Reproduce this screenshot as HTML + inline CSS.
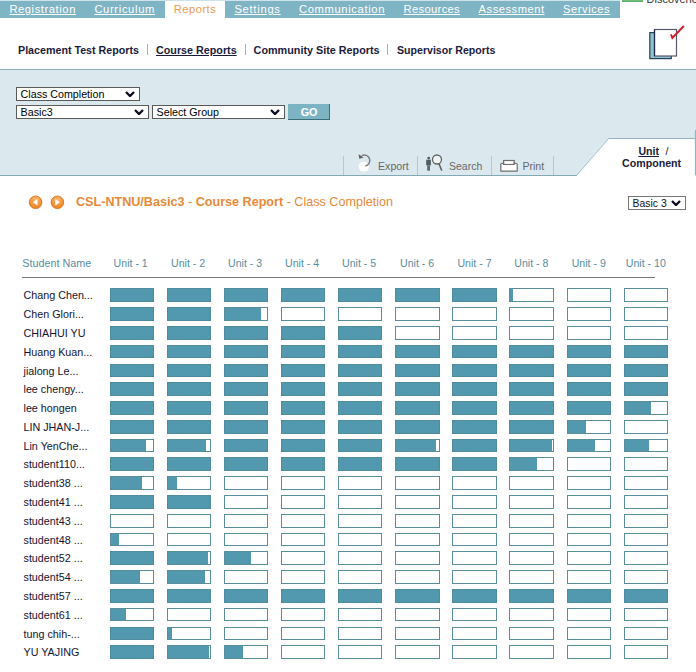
<!DOCTYPE html>
<html><head><meta charset="utf-8">
<style>
html,body{margin:0;padding:0;}
body{width:696px;height:672px;overflow:hidden;position:relative;background:#fff;font-family:"Liberation Sans",sans-serif;}
.a{position:absolute;}
.t{position:absolute;white-space:nowrap;line-height:1;}
.nav{position:absolute;left:0;top:1px;width:620px;height:17px;background:#7fb4c4;}
.nl{color:#fff;text-decoration:underline;text-underline-offset:0.5px;text-decoration-thickness:1px;}
.bf{position:absolute;width:42px;height:12px;border:1px solid #4f8d9e;background:#5298ae;}
.be{position:absolute;width:42px;height:12px;border:1px solid #5a8e9b;background:#fff;}
.be i{position:absolute;left:0;top:0;height:12px;background:#5298ae;}
.sel{position:absolute;border:1px solid #5a5a5a;background:#fff;box-sizing:border-box;}
.chev{position:absolute;}
.sep{position:absolute;width:1px;background:#a8cdd6;}
</style></head><body>
<!-- top nav -->
<div class="a" style="left:0;top:0;width:620px;height:1px;background:#cfe3ea"></div>
<div class="nav"></div>
<div class="a" style="left:165px;top:1px;width:60px;height:18px;background:#fff"></div>
<div class="t nl" style="left:9.4px;top:3.9px;font-size:11.2px;letter-spacing:0.57px">Registration</div>
<div class="t nl" style="left:94.4px;top:3.9px;font-size:11.2px;letter-spacing:0.65px">Curriculum</div>
<div class="t" style="left:173.8px;top:3.9px;font-size:11.2px;letter-spacing:0.47px;color:#ec9a55">Reports</div>
<div class="t nl" style="left:234.4px;top:3.9px;font-size:11.2px;letter-spacing:0.73px">Settings</div>
<div class="t nl" style="left:299.0px;top:3.9px;font-size:11.2px;letter-spacing:0.64px">Communication</div>
<div class="t nl" style="left:403.59999999999997px;top:3.9px;font-size:11.2px;letter-spacing:0.33px">Resources</div>
<div class="t nl" style="left:478.59999999999997px;top:3.9px;font-size:11.2px;letter-spacing:0.5px">Assessment</div>
<div class="t nl" style="left:563.0px;top:3.9px;font-size:11.2px;letter-spacing:0.54px">Services</div>
<div class="a" style="left:622px;top:0;width:21px;height:2px;background:linear-gradient(#7cc888,#4fa86a)"></div>
<div class="t" style="left:646.5px;top:-6.2px;font-size:10.8px;color:#333;letter-spacing:0.1px">Discoveries</div>

<!-- sub nav -->
<div class="t" style="left:18px;top:45px;font-size:10.7px;font-weight:bold;color:#1b1b3b">Placement Test Reports</div>
<div class="a" style="left:147px;top:44px;width:1px;height:11px;background:#92b9c4"></div>
<div class="t" style="left:156px;top:45px;font-size:10.75px;font-weight:bold;color:#1b1b3b;text-decoration:underline">Course Reports</div>
<div class="a" style="left:245px;top:44px;width:1px;height:11px;background:#92b9c4"></div>
<div class="t" style="left:253.6px;top:45px;font-size:10.8px;font-weight:bold;color:#1b1b3b">Community Site Reports</div>
<div class="a" style="left:387px;top:44px;width:1px;height:11px;background:#92b9c4"></div>
<div class="t" style="left:397px;top:45px;font-size:10.6px;font-weight:bold;color:#1b1b3b">Supervisor Reports</div>

<!-- icon -->
<svg class="a" style="left:640px;top:18px" width="56" height="52" viewBox="0 0 56 52">
  <rect x="9.8" y="14.6" width="21.5" height="26" fill="#8ec0d0" stroke="#2b3f55" stroke-width="1.2"/>
  <rect x="14.5" y="11.5" width="22" height="26.5" fill="#fff" stroke="#55596a" stroke-width="1.2"/>
  <path d="M31 16.3 L32.4 20 L43.8 8" fill="none" stroke="#d0202a" stroke-width="2"/>
  <path d="M14.5 11.5 V38" stroke="#1d2840" stroke-width="1.2"/>
</svg>

<!-- panel -->
<div class="a" style="left:0;top:69px;width:696px;height:1px;background:#8fb1bb"></div>
<div class="a" style="left:0;top:70px;width:696px;height:105px;background:#dbe9ef"></div>
<div class="a" style="left:0;top:175px;width:577px;height:1px;background:#80a9b4"></div>

<!-- selects -->
<div class="sel" style="left:16px;top:87px;width:124px;height:14px"></div>
<div class="t" style="left:20.6px;top:88.6px;font-size:10.7px;color:#000">Class Completion</div>
<svg class="chev" style="left:125px;top:91px" width="10" height="6" viewBox="0 0 10 6"><path d="M1 1 L5 5 L9 1" fill="none" stroke="#0a0a20" stroke-width="2.3"/></svg>
<div class="sel" style="left:16px;top:105px;width:133px;height:14px"></div>
<div class="t" style="left:20.6px;top:106.6px;font-size:10.7px;color:#000">Basic3</div>
<svg class="chev" style="left:134px;top:109px" width="10" height="6" viewBox="0 0 10 6"><path d="M1 1 L5 5 L9 1" fill="none" stroke="#0a0a20" stroke-width="2.3"/></svg>
<div class="sel" style="left:152px;top:105px;width:133px;height:14px"></div>
<div class="t" style="left:156.6px;top:106.6px;font-size:10.7px;color:#000">Select Group</div>
<svg class="chev" style="left:270px;top:109px" width="10" height="6" viewBox="0 0 10 6"><path d="M1 1 L5 5 L9 1" fill="none" stroke="#0a0a20" stroke-width="2.3"/></svg>
<div class="a" style="left:288px;top:104px;width:41px;height:15px;background:#7db4c4;border-right:1px solid #3e6d7a;border-bottom:1px solid #3e6d7a"></div>
<div class="t" style="left:300.7px;top:107px;font-size:10.8px;font-weight:bold;color:#fff">GO</div>

<!-- toolbar -->
<div class="sep" style="left:343px;top:156px;height:19px"></div>
<div class="sep" style="left:417px;top:156px;height:19px"></div>
<div class="sep" style="left:491px;top:156px;height:19px"></div>
<div class="sep" style="left:553px;top:156px;height:19px"></div>
<svg class="a" style="left:352px;top:150px" width="24" height="24" viewBox="0 0 24 24">
  <circle cx="11.8" cy="16.6" r="5.2" fill="#fff"/>
  <path d="M13.3 15.9 A5.5 5.5 0 1 0 9.8 5.6" fill="none" stroke="#7e7e7e" stroke-width="1.5"/>
  <path d="M6.6 4.3 L7.3 8.8 L11.6 7.6 Z" fill="#5d5d5d"/>
</svg>
<div class="t" style="left:378px;top:161px;font-size:10.65px;color:#676767">Export</div>
<svg class="a" style="left:422px;top:150px" width="24" height="24" viewBox="0 0 24 24">
  <circle cx="6.7" cy="8.1" r="1.4" fill="#4e5e62"/>
  <path d="M4.2 9.7 H8.9 V15.5 H4.2 Z" fill="#4e5e62"/>
  <path d="M5.2 15.5 H8 V20.7 H5.2 Z" fill="#5b6a6e"/>
  <circle cx="15" cy="9.5" r="4.5" fill="#eef4f6" stroke="#626262" stroke-width="1.3"/>
  <path d="M16.9 13.6 L19.8 20.6" stroke="#626262" stroke-width="1.5"/>
</svg>
<div class="t" style="left:449px;top:161px;font-size:10.5px;color:#676767">Search</div>
<svg class="a" style="left:496px;top:152px" width="26" height="24" viewBox="0 0 26 24">
  <rect x="7.6" y="8.5" width="10.6" height="4" fill="#fff" stroke="#6e6e6e" stroke-width="1.2"/>
  <path d="M7.6 10.8 L4.8 12 V19.1 H21.2 V12 L18.2 10.8 V12.5 H7.6 Z" fill="#fff" stroke="#6e6e6e" stroke-width="1.2" stroke-linejoin="round"/>
</svg>
<div class="t" style="left:522.4px;top:161px;font-size:10.6px;color:#676767">Print</div>

<!-- tab -->
<svg class="a" style="left:570px;top:130px" width="126" height="50" viewBox="0 0 126 50">
  <path d="M7 45.5 L39 8.5 H125 V50 H7 Z" fill="#fff"/>
  <path d="M6.5 45.5 L38.8 8.3" fill="none" stroke="#abc6ce" stroke-width="1"/>
  <path d="M38.8 8.5 H125" fill="none" stroke="#8fb6c1" stroke-width="1"/>
  <path d="M125.5 0 V45.5" stroke="#8ab8c5" stroke-width="1.2"/>
</svg>
<div class="t" style="left:638.4px;top:146px;font-size:10.6px;font-weight:bold;color:#1b1b3b;text-decoration:underline">Unit</div>
<div class="t" style="left:665.5px;top:146px;font-size:10.6px;color:#1b1b3b">/</div>
<div class="t" style="left:622px;top:158px;font-size:10.65px;font-weight:bold;color:#1b1b3b">Component</div>

<!-- title -->
<svg class="a" style="left:28px;top:195px" width="40" height="15" viewBox="0 0 40 15">
  <defs><radialGradient id="og" cx="0.5" cy="0.3" r="0.7"><stop offset="0" stop-color="#ffb870"/><stop offset="1" stop-color="#e8801e"/></radialGradient></defs>
  <circle cx="7.6" cy="7.3" r="6.3" fill="url(#og)" stroke="#d26c1a" stroke-width="0.8"/>
  <path d="M9.5 4 L5 7.2 L9.5 10.4 Z" fill="#fff"/>
  <circle cx="29.4" cy="7.3" r="6.3" fill="url(#og)" stroke="#d26c1a" stroke-width="0.8"/>
  <path d="M27.3 4 L31.8 7.2 L27.3 10.4 Z" fill="#fff"/>
</svg>
<div class="t" style="left:76px;top:196px;font-size:12.6px;color:#e8893a"><b>CSL-NTNU/Basic3</b> - <b>Course Report</b> - Class Completion</div>

<div class="sel" style="left:628px;top:196px;width:58px;height:14px;border-color:#777"></div>
<div class="t" style="left:632.6px;top:198.6px;font-size:10.4px;color:#111">Basic 3</div>
<svg class="chev" style="left:671px;top:200px" width="10" height="6" viewBox="0 0 10 6"><path d="M1 1 L5 5 L9 1" fill="none" stroke="#0a0a20" stroke-width="2.3"/></svg>

<!-- header -->
<div class="t" style="left:22.2px;top:258px;font-size:10.8px;color:#588ea0">Student Name</div>
<div class="t" style="left:113.6px;top:258px;font-size:10.6px;color:#588ea0">Unit - 1</div>
<div class="t" style="left:171px;top:258px;font-size:10.6px;color:#588ea0">Unit - 2</div>
<div class="t" style="left:228px;top:258px;font-size:10.6px;color:#588ea0">Unit - 3</div>
<div class="t" style="left:285px;top:258px;font-size:10.6px;color:#588ea0">Unit - 4</div>
<div class="t" style="left:342px;top:258px;font-size:10.6px;color:#588ea0">Unit - 5</div>
<div class="t" style="left:400px;top:258px;font-size:10.6px;color:#588ea0">Unit - 6</div>
<div class="t" style="left:457.4px;top:258px;font-size:10.6px;color:#588ea0">Unit - 7</div>
<div class="t" style="left:514.3px;top:258px;font-size:10.6px;color:#588ea0">Unit - 8</div>
<div class="t" style="left:571.7px;top:258px;font-size:10.6px;color:#588ea0">Unit - 9</div>
<div class="t" style="left:625.8px;top:258px;font-size:10.6px;color:#588ea0">Unit - 10</div>
<div class="a" style="left:22px;top:277px;width:633px;height:1px;background:#7a7a7a"></div>

<div class="t" style="left:23.5px;top:289.90px;font-size:10.75px;color:#141430">Chang Chen...</div>
<div class="bf" style="left:110px;top:288px;width:42px;height:12px"></div>
<div class="bf" style="left:167px;top:288px;width:42px;height:12px"></div>
<div class="bf" style="left:224px;top:288px;width:42px;height:12px"></div>
<div class="bf" style="left:281px;top:288px;width:42px;height:12px"></div>
<div class="bf" style="left:338px;top:288px;width:42px;height:12px"></div>
<div class="bf" style="left:395px;top:288px;width:43px;height:12px"></div>
<div class="bf" style="left:452px;top:288px;width:43px;height:12px"></div>
<div class="be" style="left:509px;top:288px;width:43px;height:12px"><i style="width:3px;height:12px"></i></div>
<div class="be" style="left:567px;top:288px;width:42px;height:12px"></div>
<div class="be" style="left:624px;top:288px;width:42px;height:12px"></div>
<div class="t" style="left:23.5px;top:308.90px;font-size:10.75px;color:#141430">Chen Glori...</div>
<div class="bf" style="left:110px;top:307px;width:42px;height:12px"></div>
<div class="bf" style="left:167px;top:307px;width:42px;height:12px"></div>
<div class="be" style="left:224px;top:307px;width:42px;height:12px"><i style="width:36px;height:12px"></i></div>
<div class="be" style="left:281px;top:307px;width:42px;height:12px"></div>
<div class="be" style="left:338px;top:307px;width:42px;height:12px"></div>
<div class="be" style="left:395px;top:307px;width:43px;height:12px"></div>
<div class="be" style="left:452px;top:307px;width:43px;height:12px"></div>
<div class="be" style="left:509px;top:307px;width:43px;height:12px"></div>
<div class="be" style="left:567px;top:307px;width:42px;height:12px"></div>
<div class="be" style="left:624px;top:307px;width:42px;height:12px"></div>
<div class="t" style="left:23.5px;top:327.90px;font-size:10.75px;color:#141430">CHIAHUI YU</div>
<div class="bf" style="left:110px;top:326px;width:42px;height:12px"></div>
<div class="bf" style="left:167px;top:326px;width:42px;height:12px"></div>
<div class="bf" style="left:224px;top:326px;width:42px;height:12px"></div>
<div class="bf" style="left:281px;top:326px;width:42px;height:12px"></div>
<div class="bf" style="left:338px;top:326px;width:42px;height:12px"></div>
<div class="be" style="left:395px;top:326px;width:43px;height:12px"></div>
<div class="be" style="left:452px;top:326px;width:43px;height:12px"></div>
<div class="be" style="left:509px;top:326px;width:43px;height:12px"></div>
<div class="be" style="left:567px;top:326px;width:42px;height:12px"></div>
<div class="be" style="left:624px;top:326px;width:42px;height:12px"></div>
<div class="t" style="left:23.5px;top:346.90px;font-size:10.75px;color:#141430">Huang Kuan...</div>
<div class="bf" style="left:110px;top:345px;width:42px;height:11px"></div>
<div class="bf" style="left:167px;top:345px;width:42px;height:11px"></div>
<div class="bf" style="left:224px;top:345px;width:42px;height:11px"></div>
<div class="bf" style="left:281px;top:345px;width:42px;height:11px"></div>
<div class="bf" style="left:338px;top:345px;width:42px;height:11px"></div>
<div class="bf" style="left:395px;top:345px;width:43px;height:11px"></div>
<div class="bf" style="left:452px;top:345px;width:43px;height:11px"></div>
<div class="bf" style="left:509px;top:345px;width:43px;height:11px"></div>
<div class="bf" style="left:567px;top:345px;width:42px;height:11px"></div>
<div class="bf" style="left:624px;top:345px;width:42px;height:11px"></div>
<div class="t" style="left:23.5px;top:365.90px;font-size:10.75px;color:#141430">jialong Le...</div>
<div class="bf" style="left:110px;top:364px;width:42px;height:11px"></div>
<div class="bf" style="left:167px;top:364px;width:42px;height:11px"></div>
<div class="bf" style="left:224px;top:364px;width:42px;height:11px"></div>
<div class="bf" style="left:281px;top:364px;width:42px;height:11px"></div>
<div class="bf" style="left:338px;top:364px;width:42px;height:11px"></div>
<div class="bf" style="left:395px;top:364px;width:43px;height:11px"></div>
<div class="bf" style="left:452px;top:364px;width:43px;height:11px"></div>
<div class="bf" style="left:509px;top:364px;width:43px;height:11px"></div>
<div class="bf" style="left:567px;top:364px;width:42px;height:11px"></div>
<div class="bf" style="left:624px;top:364px;width:42px;height:11px"></div>
<div class="t" style="left:23.5px;top:383.90px;font-size:10.75px;color:#141430">lee chengy...</div>
<div class="bf" style="left:110px;top:382px;width:42px;height:12px"></div>
<div class="bf" style="left:167px;top:382px;width:42px;height:12px"></div>
<div class="bf" style="left:224px;top:382px;width:42px;height:12px"></div>
<div class="bf" style="left:281px;top:382px;width:42px;height:12px"></div>
<div class="bf" style="left:338px;top:382px;width:42px;height:12px"></div>
<div class="bf" style="left:395px;top:382px;width:43px;height:12px"></div>
<div class="bf" style="left:452px;top:382px;width:43px;height:12px"></div>
<div class="bf" style="left:509px;top:382px;width:43px;height:12px"></div>
<div class="bf" style="left:567px;top:382px;width:42px;height:12px"></div>
<div class="bf" style="left:624px;top:382px;width:42px;height:12px"></div>
<div class="t" style="left:23.5px;top:402.90px;font-size:10.75px;color:#141430">lee hongen</div>
<div class="bf" style="left:110px;top:401px;width:42px;height:12px"></div>
<div class="bf" style="left:167px;top:401px;width:42px;height:12px"></div>
<div class="bf" style="left:224px;top:401px;width:42px;height:12px"></div>
<div class="bf" style="left:281px;top:401px;width:42px;height:12px"></div>
<div class="bf" style="left:338px;top:401px;width:42px;height:12px"></div>
<div class="bf" style="left:395px;top:401px;width:43px;height:12px"></div>
<div class="bf" style="left:452px;top:401px;width:43px;height:12px"></div>
<div class="bf" style="left:509px;top:401px;width:43px;height:12px"></div>
<div class="bf" style="left:567px;top:401px;width:42px;height:12px"></div>
<div class="be" style="left:624px;top:401px;width:42px;height:12px"><i style="width:26px;height:12px"></i></div>
<div class="t" style="left:23.5px;top:421.90px;font-size:10.75px;color:#141430">LIN JHAN-J...</div>
<div class="bf" style="left:110px;top:420px;width:42px;height:12px"></div>
<div class="bf" style="left:167px;top:420px;width:42px;height:12px"></div>
<div class="bf" style="left:224px;top:420px;width:42px;height:12px"></div>
<div class="bf" style="left:281px;top:420px;width:42px;height:12px"></div>
<div class="bf" style="left:338px;top:420px;width:42px;height:12px"></div>
<div class="bf" style="left:395px;top:420px;width:43px;height:12px"></div>
<div class="bf" style="left:452px;top:420px;width:43px;height:12px"></div>
<div class="bf" style="left:509px;top:420px;width:43px;height:12px"></div>
<div class="be" style="left:567px;top:420px;width:42px;height:12px"><i style="width:18px;height:12px"></i></div>
<div class="be" style="left:624px;top:420px;width:42px;height:12px"></div>
<div class="t" style="left:23.5px;top:440.90px;font-size:10.75px;color:#141430">Lin YenChe...</div>
<div class="be" style="left:110px;top:439px;width:42px;height:11px"><i style="width:35px;height:11px"></i></div>
<div class="be" style="left:167px;top:439px;width:42px;height:11px"><i style="width:38px;height:11px"></i></div>
<div class="bf" style="left:224px;top:439px;width:42px;height:11px"></div>
<div class="bf" style="left:281px;top:439px;width:42px;height:11px"></div>
<div class="bf" style="left:338px;top:439px;width:42px;height:11px"></div>
<div class="be" style="left:395px;top:439px;width:43px;height:11px"><i style="width:40px;height:11px"></i></div>
<div class="bf" style="left:452px;top:439px;width:43px;height:11px"></div>
<div class="be" style="left:509px;top:439px;width:43px;height:11px"><i style="width:42px;height:11px"></i></div>
<div class="be" style="left:567px;top:439px;width:42px;height:11px"><i style="width:27px;height:11px"></i></div>
<div class="be" style="left:624px;top:439px;width:42px;height:11px"><i style="width:24px;height:11px"></i></div>
<div class="t" style="left:23.5px;top:458.90px;font-size:10.75px;color:#141430">student110...</div>
<div class="bf" style="left:110px;top:457px;width:42px;height:12px"></div>
<div class="bf" style="left:167px;top:457px;width:42px;height:12px"></div>
<div class="bf" style="left:224px;top:457px;width:42px;height:12px"></div>
<div class="bf" style="left:281px;top:457px;width:42px;height:12px"></div>
<div class="bf" style="left:338px;top:457px;width:42px;height:12px"></div>
<div class="bf" style="left:395px;top:457px;width:43px;height:12px"></div>
<div class="bf" style="left:452px;top:457px;width:43px;height:12px"></div>
<div class="be" style="left:509px;top:457px;width:43px;height:12px"><i style="width:27px;height:12px"></i></div>
<div class="be" style="left:567px;top:457px;width:42px;height:12px"></div>
<div class="be" style="left:624px;top:457px;width:42px;height:12px"></div>
<div class="t" style="left:23.5px;top:477.90px;font-size:10.75px;color:#141430">student38 ...</div>
<div class="be" style="left:110px;top:476px;width:42px;height:12px"><i style="width:31px;height:12px"></i></div>
<div class="be" style="left:167px;top:476px;width:42px;height:12px"><i style="width:9px;height:12px"></i></div>
<div class="be" style="left:224px;top:476px;width:42px;height:12px"></div>
<div class="be" style="left:281px;top:476px;width:42px;height:12px"></div>
<div class="be" style="left:338px;top:476px;width:42px;height:12px"></div>
<div class="be" style="left:395px;top:476px;width:43px;height:12px"></div>
<div class="be" style="left:452px;top:476px;width:43px;height:12px"></div>
<div class="be" style="left:509px;top:476px;width:43px;height:12px"></div>
<div class="be" style="left:567px;top:476px;width:42px;height:12px"></div>
<div class="be" style="left:624px;top:476px;width:42px;height:12px"></div>
<div class="t" style="left:23.5px;top:496.90px;font-size:10.75px;color:#141430">student41 ...</div>
<div class="bf" style="left:110px;top:495px;width:42px;height:12px"></div>
<div class="bf" style="left:167px;top:495px;width:42px;height:12px"></div>
<div class="be" style="left:224px;top:495px;width:42px;height:12px"></div>
<div class="be" style="left:281px;top:495px;width:42px;height:12px"></div>
<div class="be" style="left:338px;top:495px;width:42px;height:12px"></div>
<div class="be" style="left:395px;top:495px;width:43px;height:12px"></div>
<div class="be" style="left:452px;top:495px;width:43px;height:12px"></div>
<div class="be" style="left:509px;top:495px;width:43px;height:12px"></div>
<div class="be" style="left:567px;top:495px;width:42px;height:12px"></div>
<div class="be" style="left:624px;top:495px;width:42px;height:12px"></div>
<div class="t" style="left:23.5px;top:515.90px;font-size:10.75px;color:#141430">student43 ...</div>
<div class="be" style="left:110px;top:514px;width:42px;height:12px"></div>
<div class="be" style="left:167px;top:514px;width:42px;height:12px"></div>
<div class="be" style="left:224px;top:514px;width:42px;height:12px"></div>
<div class="be" style="left:281px;top:514px;width:42px;height:12px"></div>
<div class="be" style="left:338px;top:514px;width:42px;height:12px"></div>
<div class="be" style="left:395px;top:514px;width:43px;height:12px"></div>
<div class="be" style="left:452px;top:514px;width:43px;height:12px"></div>
<div class="be" style="left:509px;top:514px;width:43px;height:12px"></div>
<div class="be" style="left:567px;top:514px;width:42px;height:12px"></div>
<div class="be" style="left:624px;top:514px;width:42px;height:12px"></div>
<div class="t" style="left:23.5px;top:534.90px;font-size:10.75px;color:#141430">student48 ...</div>
<div class="be" style="left:110px;top:533px;width:42px;height:11px"><i style="width:8px;height:11px"></i></div>
<div class="be" style="left:167px;top:533px;width:42px;height:11px"></div>
<div class="be" style="left:224px;top:533px;width:42px;height:11px"></div>
<div class="be" style="left:281px;top:533px;width:42px;height:11px"></div>
<div class="be" style="left:338px;top:533px;width:42px;height:11px"></div>
<div class="be" style="left:395px;top:533px;width:43px;height:11px"></div>
<div class="be" style="left:452px;top:533px;width:43px;height:11px"></div>
<div class="be" style="left:509px;top:533px;width:43px;height:11px"></div>
<div class="be" style="left:567px;top:533px;width:42px;height:11px"></div>
<div class="be" style="left:624px;top:533px;width:42px;height:11px"></div>
<div class="t" style="left:23.5px;top:552.90px;font-size:10.75px;color:#141430">student52 ...</div>
<div class="bf" style="left:110px;top:551px;width:42px;height:12px"></div>
<div class="be" style="left:167px;top:551px;width:42px;height:12px"><i style="width:40px;height:12px"></i></div>
<div class="be" style="left:224px;top:551px;width:42px;height:12px"><i style="width:26px;height:12px"></i></div>
<div class="be" style="left:281px;top:551px;width:42px;height:12px"></div>
<div class="be" style="left:338px;top:551px;width:42px;height:12px"></div>
<div class="be" style="left:395px;top:551px;width:43px;height:12px"></div>
<div class="be" style="left:452px;top:551px;width:43px;height:12px"></div>
<div class="be" style="left:509px;top:551px;width:43px;height:12px"></div>
<div class="be" style="left:567px;top:551px;width:42px;height:12px"></div>
<div class="be" style="left:624px;top:551px;width:42px;height:12px"></div>
<div class="t" style="left:23.5px;top:571.90px;font-size:10.75px;color:#141430">student54 ...</div>
<div class="be" style="left:110px;top:570px;width:42px;height:12px"><i style="width:29px;height:12px"></i></div>
<div class="be" style="left:167px;top:570px;width:42px;height:12px"><i style="width:37px;height:12px"></i></div>
<div class="be" style="left:224px;top:570px;width:42px;height:12px"></div>
<div class="be" style="left:281px;top:570px;width:42px;height:12px"></div>
<div class="be" style="left:338px;top:570px;width:42px;height:12px"></div>
<div class="be" style="left:395px;top:570px;width:43px;height:12px"></div>
<div class="be" style="left:452px;top:570px;width:43px;height:12px"></div>
<div class="be" style="left:509px;top:570px;width:43px;height:12px"></div>
<div class="be" style="left:567px;top:570px;width:42px;height:12px"></div>
<div class="be" style="left:624px;top:570px;width:42px;height:12px"></div>
<div class="t" style="left:23.5px;top:590.90px;font-size:10.75px;color:#141430">student57 ...</div>
<div class="bf" style="left:110px;top:589px;width:42px;height:12px"></div>
<div class="bf" style="left:167px;top:589px;width:42px;height:12px"></div>
<div class="bf" style="left:224px;top:589px;width:42px;height:12px"></div>
<div class="bf" style="left:281px;top:589px;width:42px;height:12px"></div>
<div class="bf" style="left:338px;top:589px;width:42px;height:12px"></div>
<div class="bf" style="left:395px;top:589px;width:43px;height:12px"></div>
<div class="bf" style="left:452px;top:589px;width:43px;height:12px"></div>
<div class="bf" style="left:509px;top:589px;width:43px;height:12px"></div>
<div class="bf" style="left:567px;top:589px;width:42px;height:12px"></div>
<div class="bf" style="left:624px;top:589px;width:42px;height:12px"></div>
<div class="t" style="left:23.5px;top:609.90px;font-size:10.75px;color:#141430">student61 ...</div>
<div class="be" style="left:110px;top:608px;width:42px;height:11px"><i style="width:15px;height:11px"></i></div>
<div class="be" style="left:167px;top:608px;width:42px;height:11px"></div>
<div class="be" style="left:224px;top:608px;width:42px;height:11px"></div>
<div class="be" style="left:281px;top:608px;width:42px;height:11px"></div>
<div class="be" style="left:338px;top:608px;width:42px;height:11px"></div>
<div class="be" style="left:395px;top:608px;width:43px;height:11px"></div>
<div class="be" style="left:452px;top:608px;width:43px;height:11px"></div>
<div class="be" style="left:509px;top:608px;width:43px;height:11px"></div>
<div class="be" style="left:567px;top:608px;width:42px;height:11px"></div>
<div class="be" style="left:624px;top:608px;width:42px;height:11px"></div>
<div class="t" style="left:23.5px;top:628.90px;font-size:10.75px;color:#141430">tung chih-...</div>
<div class="bf" style="left:110px;top:627px;width:42px;height:11px"></div>
<div class="be" style="left:167px;top:627px;width:42px;height:11px"><i style="width:4px;height:11px"></i></div>
<div class="be" style="left:224px;top:627px;width:42px;height:11px"></div>
<div class="be" style="left:281px;top:627px;width:42px;height:11px"></div>
<div class="be" style="left:338px;top:627px;width:42px;height:11px"></div>
<div class="be" style="left:395px;top:627px;width:43px;height:11px"></div>
<div class="be" style="left:452px;top:627px;width:43px;height:11px"></div>
<div class="be" style="left:509px;top:627px;width:43px;height:11px"></div>
<div class="be" style="left:567px;top:627px;width:42px;height:11px"></div>
<div class="be" style="left:624px;top:627px;width:42px;height:11px"></div>
<div class="t" style="left:23.5px;top:646.90px;font-size:10.75px;color:#141430">YU YAJING</div>
<div class="bf" style="left:110px;top:645px;width:42px;height:12px"></div>
<div class="be" style="left:167px;top:645px;width:42px;height:12px"><i style="width:41px;height:12px"></i></div>
<div class="be" style="left:224px;top:645px;width:42px;height:12px"><i style="width:18px;height:12px"></i></div>
<div class="be" style="left:281px;top:645px;width:42px;height:12px"></div>
<div class="be" style="left:338px;top:645px;width:42px;height:12px"></div>
<div class="be" style="left:395px;top:645px;width:43px;height:12px"></div>
<div class="be" style="left:452px;top:645px;width:43px;height:12px"></div>
<div class="be" style="left:509px;top:645px;width:43px;height:12px"></div>
<div class="be" style="left:567px;top:645px;width:42px;height:12px"></div>
<div class="be" style="left:624px;top:645px;width:42px;height:12px"></div>
</body></html>
